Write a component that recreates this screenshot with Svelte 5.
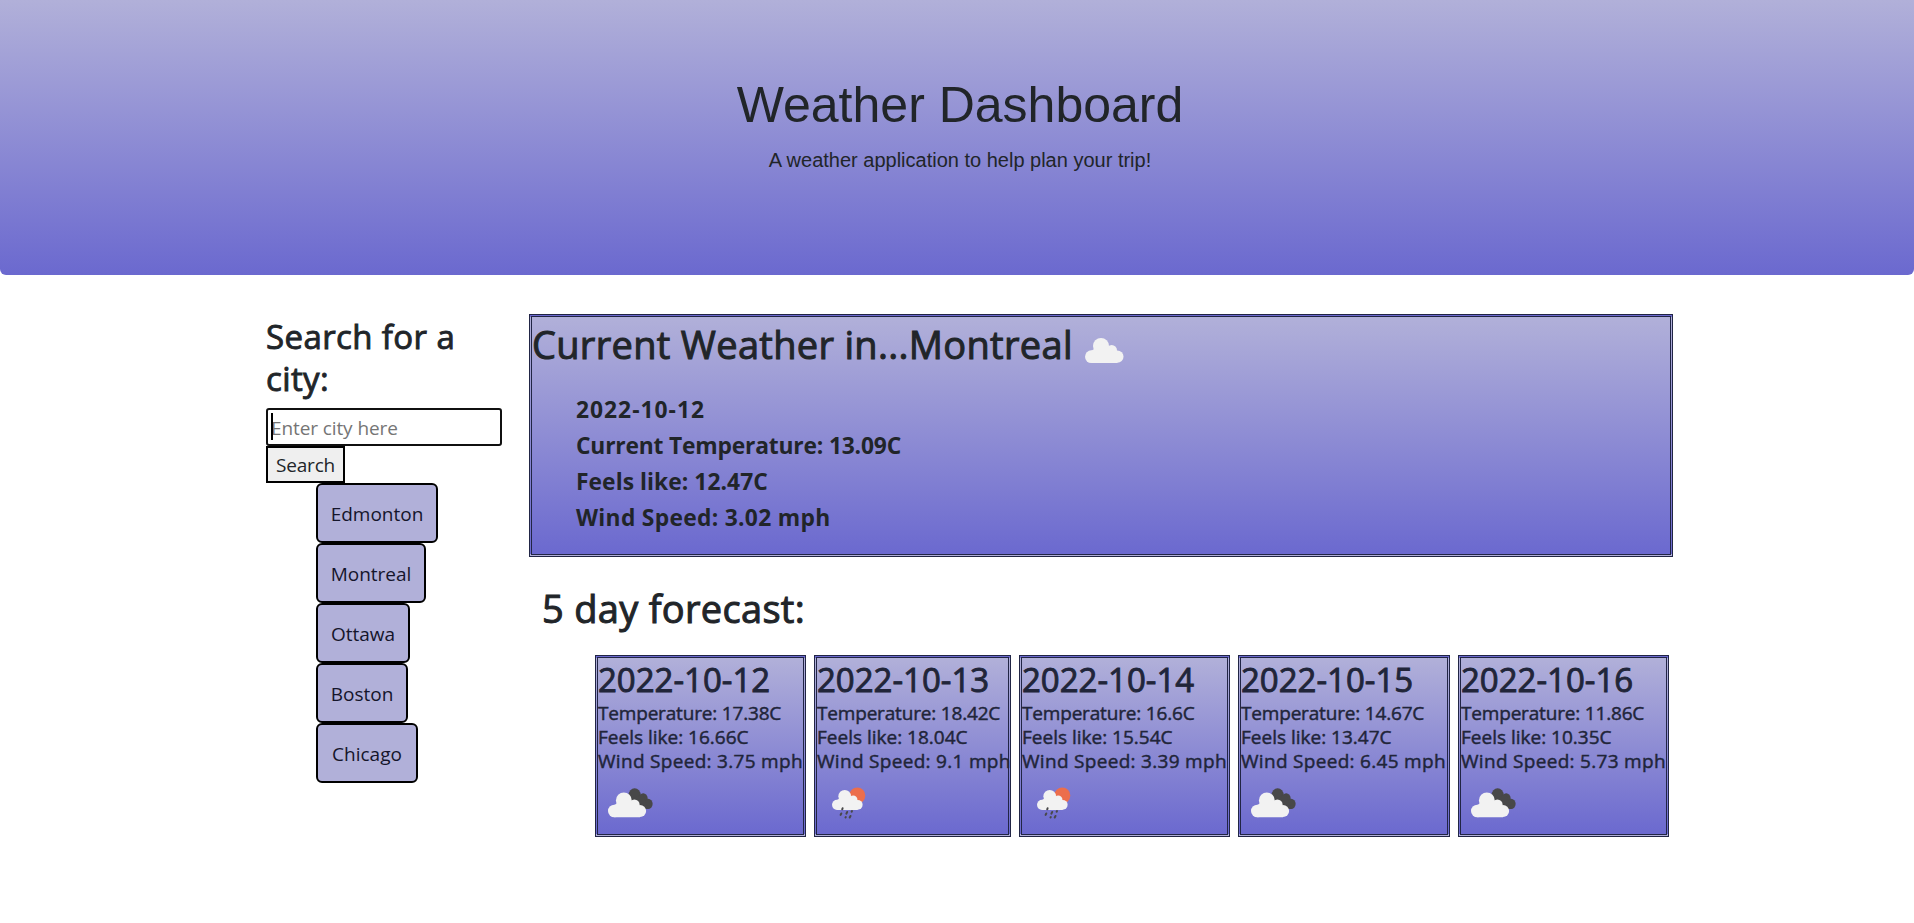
<script>
  const cities = [
    { name: 'Edmonton', width: 122 },
    { name: 'Montreal', width: 110 },
    { name: 'Ottawa', width: 94 },
    { name: 'Boston', width: 92 },
    { name: 'Chicago', width: 102 }
  ];
  const days = [
    { date: '2022-10-12', temp: '17.38', feels: '16.66', wind: '3.75', icon: 'clouds', width: 211 },
    { date: '2022-10-13', temp: '18.42', feels: '18.04', wind: '9.1', icon: 'rain', width: 197 },
    { date: '2022-10-14', temp: '16.6', feels: '15.54', wind: '3.39', icon: 'rain', width: 211 },
    { date: '2022-10-15', temp: '14.67', feels: '13.47', wind: '6.45', icon: 'clouds', width: 212 },
    { date: '2022-10-16', temp: '11.86', feels: '10.35', wind: '5.73', icon: 'clouds', width: 211 }
  ];
</script>

{#snippet cloud()}
  <circle cx="19" cy="56" r="19" />
  <circle cx="48" cy="24" r="24" />
  <circle cx="80" cy="37" r="16" />
  <circle cx="97" cy="56" r="18.5" />
  <path d="M19 75V38L48 20L80 34L97 50V75Z" />
{/snippet}

<header>
  <h1>Weather Dashboard</h1>
  <p>A weather application to help plan your trip!</p>
</header>

<main>
  <aside>
    <h2>Search for a city:</h2>
    <div class="field">
      <input type="text" placeholder="Enter city here" />
      <span class="caret"></span>
    </div>
    <button class="search">Search</button>
    <ul class="cities">
      {#each cities as city}
        <li><button style:width="{city.width}px">{city.name}</button></li>
      {/each}
    </ul>
  </aside>

  <section class="weather">
    <article class="current">
      <div class="heading">
        <h1>Current Weather in...Montreal</h1>
        <svg width="39" height="25" viewBox="0 0 117 75" fill="#f2f2f2">{@render cloud()}</svg>
      </div>
      <ul>
        <li class="date">2022-10-12</li>
        <li class="temp">Current Temperature: 13.09C</li>
        <li class="feels">Feels like: 12.47C</li>
        <li class="wind">Wind Speed: 3.02 mph</li>
      </ul>
    </article>

    <h1 class="title">5 day forecast:</h1>
    <div class="forecast">
      {#each days as day}
        <article style:width="{day.width}px">
          <h2>{day.date}</h2>
          <p class="temp">Temperature: {day.temp}C</p>
          <p>Feels like: {day.feels}C</p>
          <p class="wind">Wind Speed: {day.wind} mph</p>
          <svg width="60" height="40" viewBox="0 0 60 40">
            {#if day.icon === 'clouds'}
              <g transform="translate(29 5.5) scale(.225 .26)" fill="#484849">
                <circle cx="34" cy="26" r="27" />
                <circle cx="72" cy="38" r="20" />
                <circle cx="94" cy="59" r="20" />
                <path d="M20 40L72 20L94 79H60Z" />
              </g>
              <g transform="translate(10 9.5) scale(.33)" fill="#f2f2f2">{@render cloud()}</g>
            {:else}
              <circle cx="40.3" cy="12.5" r="8" fill="#ec6e4c" />
              <g transform="translate(15 7) scale(.265)" fill="#f2f2f2">{@render cloud()}</g>
              <g stroke="#484849" stroke-width="2" stroke-linecap="round">
                <path d="M25.6 25.3l-.4 1M30.2 29l-.8 1.6M35 28l-.4.7M24.3 30.5l-.7 1.4M28.8 34l-.3.5M33.5 33l-.8 1.5" />
              </g>
            {/if}
          </svg>
        </article>
      {/each}
    </div>
  </section>
</main>

<style>
  :global(body) {
    margin: 0;
    background: #fff;
  }
  h1, h2, p, ul {
    margin: 0;
    padding: 0;
    font-weight: 400;
  }
  ul {
    list-style: none;
  }
  header {
    box-sizing: border-box;
    height: 275px;
    padding-top: 75px;
    border-radius: 0 0 6px 6px;
    background: linear-gradient(#b1b0d9, #6b69cf);
    color: #212529;
    font-family: 'Liberation Sans', Arial, sans-serif;
    text-align: center;
    padding-left: 6px;
  }
  header h1 {
    font-size: 50px;
    line-height: 60px;
    margin-bottom: 10px;
  }
  header p {
    font-size: 20px;
    line-height: 30px;
  }
  main {
    display: flex;
    padding: 40px 0 0 266px;
    color: #212529;
    font-family: 'Open Sans', 'Segoe UI', sans-serif;
  }
  aside {
    width: 236px;
    margin-right: 27px;
    padding-top: 1px;
  }
  h2 {
    font-size: 33px;
    line-height: 42px;
    -webkit-text-stroke: 0.9px currentColor;
  }
  aside h2 {
    margin-bottom: 8px;
    letter-spacing: 0.4px;
  }
  .field {
    position: relative;
    height: 38px;
  }
  input {
    box-sizing: border-box;
    display: block;
    width: 236px;
    height: 38px;
    padding: 1px 3px 0;
    border: 2px solid #101010;
    border-radius: 3px;
    outline: none;
    background: #fff;
    font: 400 19px/33px 'Open Sans', sans-serif;
    letter-spacing: -0.1px;
  }
  input::placeholder {
    color: #757575;
  }
  .caret {
    position: absolute;
    left: 5px;
    top: 5px;
    width: 2px;
    height: 27px;
    background: #000;
  }
  button {
    display: block;
    margin: 0;
    box-sizing: border-box;
    border: 2px solid #000;
    color: #212529;
    font: 400 19px/33px 'Open Sans', sans-serif;
  }
  .search {
    width: 79px;
    height: 37px;
    padding: 1px 0 0;
    background: #efefef;
    letter-spacing: -0.2px;
  }
  .cities {
    padding-left: 50px;
  }
  .cities button {
    height: 60px;
    padding: 2px 0 0;
    border-radius: 6px;
    background: #b1b0d9;
    color: #15152b;
  }
  .weather {
    width: 1144px;
    margin-top: -1px;
  }
  article {
    box-sizing: border-box;
    border: 3px double #212545;
    background: linear-gradient(#b1b0d9, #6b69cf);
  }
  .current {
    height: 243px;
    padding-top: 3px;
  }
  .heading {
    display: flex;
    height: 48px;
  }
  .heading svg {
    margin: 18px 0 0 12px;
  }
  .weather h1 {
    font-size: 38px;
    line-height: 48px;
    letter-spacing: 0.31px;
    -webkit-text-stroke: 1px currentColor;
  }
  .current ul {
    padding: 24px 0 0 44px;
    font-size: 22.8px;
    line-height: 36px;
  }
  .current li {
    font-weight: 700;
  }
  .current .date {
    letter-spacing: 1px;
  }
  .current .feels {
    letter-spacing: 0.06px;
  }
  .temp {
    letter-spacing: -0.18px;
  }
  .wind {
    letter-spacing: 0.3px;
  }
  .title {
    padding: 27px 0 23px 13px;
  }
  .forecast {
    display: flex;
    gap: 8px;
    padding-left: 66px;
  }
  .forecast article {
    flex: none;
    height: 182px;
    padding: 1px 0 0;
    color: #212539;
    white-space: nowrap;
  }
  .forecast p {
    font-size: 19px;
    line-height: 24px;
    -webkit-text-stroke: 0.45px currentColor;
  }
  .forecast svg {
    display: block;
    margin-top: 10px;
  }
</style>
